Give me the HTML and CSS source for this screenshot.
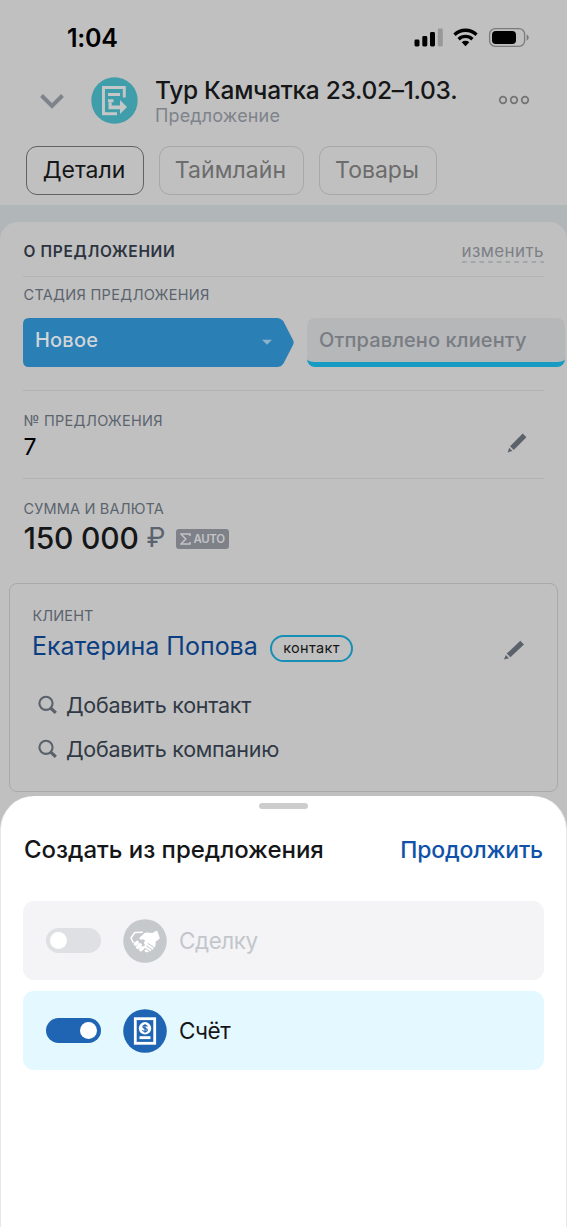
FILE: index.html
```html
<!DOCTYPE html>
<html lang="ru">
<head>
<meta charset="utf-8">
<title>Тур Камчатка 23.02–1.03.</title>
<link rel="stylesheet" href="styles.css">
</head>
<body>
<div class="screen">
  <div class="status">
    <span class="clock">1:04</span>
    <svg class="status-icons" width="116" height="22" viewBox="0 0 116 22">
      <rect x="1.500" y="12.500" width="5" height="7" rx="1.400"/>
      <rect x="9.300" y="9" width="5" height="10.500" rx="1.400"/>
      <rect x="17" y="5" width="5" height="14.500" rx="1.400"/>
      <rect x="24.800" y="1.500" width="5" height="18" rx="1.400" fill="#989898"/>
      <g fill="none" stroke="#000" stroke-width="3.300">
        <path d="M41.500 7.700a15.800 15.800 0 0 1 22 0"/>
        <path d="M45.600 12.200a10 10 0 0 1 13.800 0"/>
      </g>
      <path d="M48.700 15.200a5.600 5.600 0 0 1 7.600 0l-3.800 4z"/>
      <rect x="76.600" y="1.600" width="35" height="17.800" rx="5.600" fill="none" stroke="#7b7b7b" stroke-width="1.300"/>
      <rect x="79" y="4" width="24" height="13" rx="3.800"/>
      <path d="M113.600 7.500c2.800 1 2.800 5 0 6z" fill="#7b7b7b"/>
    </svg>
  </div>

  <div class="header">
    <svg class="back" width="26" height="18" viewBox="0 0 26 18"><path d="M2.500 3.500 13 14 23.500 3.500" fill="none" stroke="#7f838b" stroke-width="4"/></svg>
    <svg class="avatar" width="47" height="47" viewBox="0 0 47 47">
      <circle cx="23.500" cy="23.500" r="23.200" fill="#409daa"/>
      <g fill="none" stroke="#c3c7c8" stroke-width="2.900">
        <path d="M33.300 20.500v-10H12.500v26.200H26"/>
        <path d="M17 17.500h12M17 23.800h5.500"/>
      </g>
      <path d="M17.500 25.200h3.200v3.300H29v-5.500l7 7-7 7v-4.700H17.500z" fill="#c3c7c8"/>
    </svg>
    <div class="titles">
      <div class="title">Тур Камчатка 23.02–1.03.</div>
      <div class="subtitle">Предложение</div>
    </div>
    <svg class="more" width="32" height="10" viewBox="0 0 32 10" fill="none" stroke="#737373" stroke-width="1.700"><circle cx="5" cy="5" r="3.300"/><circle cx="16" cy="5" r="3.300"/><circle cx="27" cy="5" r="3.300"/></svg>
  </div>

  <div class="tabs">
    <div class="tab tab-active">Детали</div>
    <div class="tab tab-wide">Таймлайн</div>
    <div class="tab">Товары</div>
  </div>

  <div class="card-wrap">
    <div class="card">
      <div class="card-head"><span class="card-title">О ПРЕДЛОЖЕНИИ</span>
        <span class="edit">изменить<svg class="dash" width="82" height="2" viewBox="0 0 82 2"><path d="M0 1h82" stroke="#9b9ea3" stroke-width="1.300" stroke-dasharray="4.700 4"/></svg></span>
      </div>

      <div class="field stage-field">
        <div class="label stage-label">СТАДИЯ ПРЕДЛОЖЕНИЯ</div>
        <div class="stages">
          <div class="stage stage-current">
            <svg class="stage-shape" width="272" height="49" viewBox="0 0 272 49"><path d="M6 0h248q4 0 6.500 3.500l9.500 18.500q1.300 2.500 0 5l-9.500 18.500Q258 49 254 49H6q-6 0-6-6V6q0-6 6-6z" fill="#2a7fb5"/><path d="M239 21.700h10l-5 5z" fill="#8eb0c9"/></svg>
            <span class="stage-name">Новое</span>
          </div>
          <div class="stage stage-next"><span class="stage-name">Отправлено клиенту</span></div>
        </div>
      </div>

      <div class="field number-field">
        <div>
          <div class="label number-label">№ ПРЕДЛОЖЕНИЯ</div>
          <div class="number">7</div>
        </div>
        <svg class="pencil" width="24" height="24" viewBox="0 0 24 24" fill="#5b626b"><path d="m5.100 15.300 12.600-12.800 3.700 3.700L8.800 18.900z"/><path d="m4.200 16.700 3.200 3.200-4.700 1.500z"/></svg>
      </div>

      <div class="field sum-field">
        <div class="label sum-label">СУММА И ВАЛЮТА</div>
        <div class="sum-row">
          <span class="sum">150 000</span><span class="ruble">₽</span>
          <span class="auto"><svg width="11" height="12" viewBox="0 0 11 12"><path d="M10 3V1H1l4.800 5L1 11h9V9" fill="none" stroke="#c3c4c7" stroke-width="1.500"/></svg>AUTO</span>
        </div>
      </div>
    </div>

    <div class="client">
      <div class="label client-label">КЛИЕНТ</div>
      <div class="client-row">
        <span class="client-name">Екатерина Попова</span><span class="pill">контакт</span>
        <svg class="client-pencil" width="24" height="24" viewBox="0 0 24 24" fill="#5b626b"><path d="m4.700 15.600 13.600-12.800 3.700 3.700L8.400 19.200z"/><path d="m3.800 17 3.200 3.200-5 1.200z"/></svg>
      </div>
      <div class="add"><svg width="20" height="20" viewBox="0 0 20 20" fill="none" stroke="#5a616a"><circle cx="8" cy="8.300" r="6.600" stroke-width="2.100"/><path d="m12.500 12.800 5.300 5" stroke-width="3.200"/></svg><span class="add-name">Добавить контакт</span></div>
      <div class="add"><svg width="20" height="20" viewBox="0 0 20 20" fill="none" stroke="#5a616a"><circle cx="8" cy="8.300" r="6.600" stroke-width="2.100"/><path d="m12.500 12.800 5.300 5" stroke-width="3.200"/></svg><span class="add-name">Добавить компанию</span></div>
    </div>
  </div>

  <div class="sheet">
    <div class="handle"></div>
    <div class="sheet-head"><span class="sheet-title">Создать из предложения</span><span class="continue">Продолжить</span></div>
    <div class="option option-off">
      <span class="toggle"><span class="knob"></span></span>
      <svg class="option-icon" width="44" height="44" viewBox="0 0 44 44">
        <circle cx="22" cy="22" r="21.800" fill="#c5c9cc"/>
        <path d="m10.500 24-2.500-5 3.800-5.500 8-.3" fill="none" stroke="#fff" stroke-width="1.500" stroke-linejoin="round"/>
        <path d="m17 18.300 4.500-4.300q1-.7 2.300-.5l5.700.5 4-2.200q.6-.2.900.4l2.300 6.600q.1.700-.4 1.100l-3.800 2.800q.6 2.300-.3 4.300.2 1.600-1.500 2-.4 1.800-2.200 2-.5 1.600-2.300 1.300-1.500 1.700-3.700.7l-1.300-1.500 1.500-.8-2.200-2.600 1.500-2.600-1.200-1.500 1.300-2.500-2-1.200q-3 1-3.900-.7z" fill="#fff"/>
        <g stroke="#fff" stroke-width="3.600" stroke-linecap="round"><path d="m12.500 25 1.700-1.500M14.700 28.200l2.500-2.300M17.700 30.600l2-1.800"/></g>
        <g fill="none" stroke="#c5c9cc" stroke-width="1" stroke-linecap="round"><path d="m25 24.500 6.500 4.300M23.500 27l5.500 3.700M22.300 29.500l4.200 2.800"/></g>
      </svg>
      <span class="option-name">Сделку</span>
    </div>
    <div class="option option-on">
      <span class="toggle toggle-on"><span class="knob"></span></span>
      <svg class="option-icon" width="44" height="44" viewBox="0 0 44 44">
        <circle cx="22" cy="22" r="21.800" fill="#1f65b3"/>
        <rect x="12.300" y="9.700" width="19.400" height="24.600" fill="none" stroke="#fff" stroke-width="2.800"/>
        <circle cx="22" cy="19.300" r="6.200" fill="#fff"/>
        <rect x="16.500" y="27.200" width="11" height="2.900" fill="#fff"/>
        <path d="M24.400 17.600q-.5-1.300-2.400-1.300-2.100 0-2.100 1.500 0 1.200 2.100 1.500 2.300.3 2.300 1.700 0 1.500-2.300 1.500-2 0-2.500-1.400M22 15v8.700" fill="none" stroke="#1f65b3" stroke-width="1.200"/>
      </svg>
      <span class="option-name">Счёт</span>
    </div>
  </div>
</div>
</body>
</html>
```
FILE: styles.css
```css
* { box-sizing: border-box; }
body { margin: 0; background: #c0c0c0; font-family: Inter, "Noto Sans", sans-serif; color: #151617; }
svg { display: block; flex: none; }
.screen { width: 567px; height: 1227px; overflow: hidden; display: flex; flex-direction: column; white-space: nowrap; }

.status { height: 70px; flex: none; padding: 26px 38px 0 67px; display: flex; justify-content: space-between; }
.clock { font-size: 25px; font-weight: 600; line-height: 24px; letter-spacing: -.3px; color: #000; }
.status-icons { margin-top: 1px; }

.header { height: 76px; flex: none; padding-left: 39px; display: flex; align-items: flex-start; }
.back { margin-top: 22px; }
.avatar { margin: 7px 16.500px 0 25.500px; }
.titles { width: 344px; padding-left: 1px; }
.title { margin-top: 5px; font-size: 24.500px; font-weight: 500; line-height: 30px; letter-spacing: -.3px; }
.subtitle { margin-top: 1px; font-size: 18px; line-height: 20px; letter-spacing: .15px; color: #7e838b; }
.more { margin-top: 25px; }

.tabs { height: 59px; flex: none; padding-left: 26px; display: flex; gap: 15px; }
.tab { width: 118px; height: 49px; border: 1.500px solid #a8a8a8; border-radius: 11px; text-align: center; font-size: 23px; line-height: 47px; color: #6c6c6c; padding-right: 2px; }
.tab-active { border-color: #626262; color: #151617; }
.tab-wide { width: 145px; letter-spacing: .1px; }

.card-wrap { height: 591px; flex: none; padding-top: 17px; background: linear-gradient(#b1b7b9 60px, #c0c0c0 60px); }
.card { height: 361px; padding: 0 23px; border-radius: 18px 18px 0 0; background: #c0c0c0; }
.card-head { height: 55px; border-bottom: 1px solid #b2b3b4; display: flex; justify-content: space-between; }
.card-title { margin: 20px 0 0 .5px; font-size: 15.500px; font-weight: 600; line-height: 20px; letter-spacing: .65px; color: #2d3440; }
.edit { margin-top: 19px; font-size: 17px; line-height: 20px; letter-spacing: .4px; color: #7d8087; }
.label { padding-left: .5px; font-size: 14.500px; line-height: 20px; color: #5b646e; }

.stage-field { height: 113px; margin-right: -23px; padding-top: 8px; }
.stage-label { letter-spacing: .3px; }
.stages { display: flex; gap: 12px; margin-top: 13px; }
.stage { height: 49px; font-size: 20px; font-weight: 500; line-height: 45px; padding-left: 12px; letter-spacing: .12px; }
.stage-current { position: relative; width: 272px; color: #d0d5d9; letter-spacing: .2px; }
.stage-shape { position: absolute; inset: 0; }
.stage-name { position: relative; }
.stage-next { width: 258px; border-radius: 8px; border-bottom: 5px solid #179bc2; background: #b6b7b9; color: #797c82; }

.number-field { height: 89px; border-top: 1px solid #b0b1b2; border-bottom: 1px solid #b0b1b2; display: flex; justify-content: space-between; }
.number-label { margin-top: 20px; letter-spacing: .28px; }
.number { margin-top: 5px; padding-left: .5px; font-size: 23px; line-height: 22px; color: #000; }
.pencil { margin: 40px 15px 0 0; }

.sum-label { margin-top: 20px; letter-spacing: .17px; }
.sum-row { height: 30px; margin-top: 4px; display: flex; align-items: center; }
.sum { padding-left: .5px; font-size: 30px; font-weight: 500; line-height: 30px; letter-spacing: -.2px; }
.ruble { margin-left: 8px; font-size: 27px; line-height: 30px; color: #5b646e; }
.auto { margin: 1px 0 0 10px; width: 53px; height: 20px; border-radius: 3px; background: #7f8188; color: #c3c4c7; display: flex; align-items: center; gap: 3px; padding-left: 4px; font-size: 11.500px; font-weight: 600; letter-spacing: -.4px; }

.client { width: 549px; height: 209px; margin-left: 9px; border: 1.500px solid #a8a9aa; border-radius: 8px; padding: 22px 0 0 23px; }
.client-label { margin-left: -1px; letter-spacing: .1px; }
.client-row { height: 44px; margin-bottom: 13px; display: flex; align-items: flex-start; }
.client-name { width: 238px; padding-top: 6px; font-size: 25px; line-height: 28px; margin-left: -1px; color: #0c3e82; }
.pill { width: 83px; height: 27px; margin-top: 9px; border: 2px solid #158fb6; border-radius: 14px; text-align: center; font-size: 14.500px; line-height: 22px; letter-spacing: .3px; }
.client-pencil { margin: 12px 0 0 149px; }
.add { height: 44px; margin-left: 5px; display: flex; align-items: center; gap: 8px; font-size: 21.500px; line-height: 30px; letter-spacing: -.26px; color: #303945; }

.sheet { flex: none; height: 431px; border: 1px solid #e8e8e8; border-width: 0 1px; border-radius: 34px 34px 0 0; background: #fff; padding: 7px 22px 0; }
.handle { width: 49px; height: 6px; margin: 0 auto; border-radius: 3px; background: #cdcdcd; }
.sheet-head { height: 92px; padding: 26px 1px 0; display: flex; justify-content: space-between; line-height: 30px; }
.sheet-title { font-size: 24px; font-weight: 500; letter-spacing: -.03px; }
.continue { font-size: 23px; font-weight: 500; letter-spacing: -.2px; color: #1052a9; }
.option { height: 79px; margin-bottom: 11px; border-radius: 11px; padding-left: 23px; display: flex; align-items: center; font-size: 22.500px; letter-spacing: -.45px; }
.option-off { background: #f4f4f7; color: #c3c7cb; }
.option-on { background: #e4f8ff; color: #151617; }
.toggle { width: 55px; height: 25px; border-radius: 13px; background: #dfe0e3; display: flex; align-items: center; padding: 0 4px; }
.toggle-on { background: #1f65b3; justify-content: flex-end; }
.knob { width: 17px; height: 17px; border-radius: 50%; background: #fff; }
.option-icon { margin: 0 12px 0 22px; }
```
